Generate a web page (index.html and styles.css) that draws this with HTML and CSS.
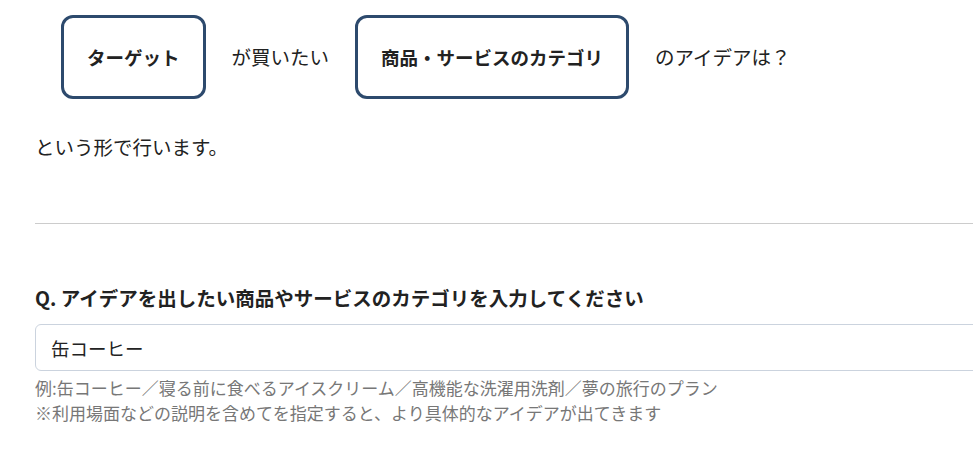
FILE: index.html
```html
<!DOCTYPE html>
<html lang="ja">
<head>
    <meta charset="UTF-8">
    <meta name="viewport" content="width=device-width, initial-scale=1.0">
    <title>アイデア生成</title>
    <link rel="stylesheet" href="styles.css">
</head>
<body>

    <div class="page">
        <div class="formula">
            <div class="slot">ターゲット</div>
            <span class="joint">が買いたい</span>
            <div class="slot">商品・サービスのカテゴリ</div>
            <span class="joint">のアイデアは？</span>
        </div>
        <p class="lead">という形で行います。</p>

        <hr class="divider">

        <div class="question">
            <label class="q-title" for="category">Q. アイデアを出したい商品やサービスのカテゴリを入力してください</label>
            <input type="text" id="category" class="q-input" value="缶コーヒー">
            <p class="q-help">例:缶コーヒー／寝る前に食べるアイスクリーム／高機能な洗濯用洗剤／夢の旅行のプラン<br>※利用場面などの説明を含めてを指定すると、より具体的なアイデアが出てきます</p>
        </div>
    </div>

</body>
</html>
```

FILE: styles.css
```css
body {
    margin: 0;
    font-family: "Noto Sans CJK JP", "Noto Sans", sans-serif;
    color: #222;
    background-color: #fff;
    overflow: hidden;
}
.page {
    width: 1200px;
    padding: 15px 0 0 35px;
}
.formula {
    display: flex;
    align-items: center;
    gap: 26px;
    padding-left: 26px;
}
.slot {
    border: 3px solid #2d4a6d;
    border-radius: 12px;
    padding: 27px 23px;
    font-size: 18.5px;
    font-weight: bold;
    line-height: 24px;
}
.joint {
    font-size: 19.5px;
    line-height: 24px;
}
.lead {
    margin: 36px 0 0;
    font-size: 19.5px;
    line-height: 24px;
}
.divider {
    border: none;
    border-top: 1px solid #ccc;
    margin: 64px 0 0;
}
.question {
    margin-top: 61px;
}
.q-title {
    display: block;
    font-size: 19.5px;
    font-weight: bold;
    line-height: 26px;
    margin-bottom: 13px;
}
.q-input {
    display: block;
    box-sizing: border-box;
    width: 100%;
    height: 47px;
    padding: 0 15px;
    font-family: inherit;
    font-size: 18.5px;
    color: #222;
    border: 1px solid #cbd3de;
    border-radius: 6px;
}
.q-help {
    margin: 4px 0 0;
    font-size: 17px;
    line-height: 25px;
    color: #777;
}
```
